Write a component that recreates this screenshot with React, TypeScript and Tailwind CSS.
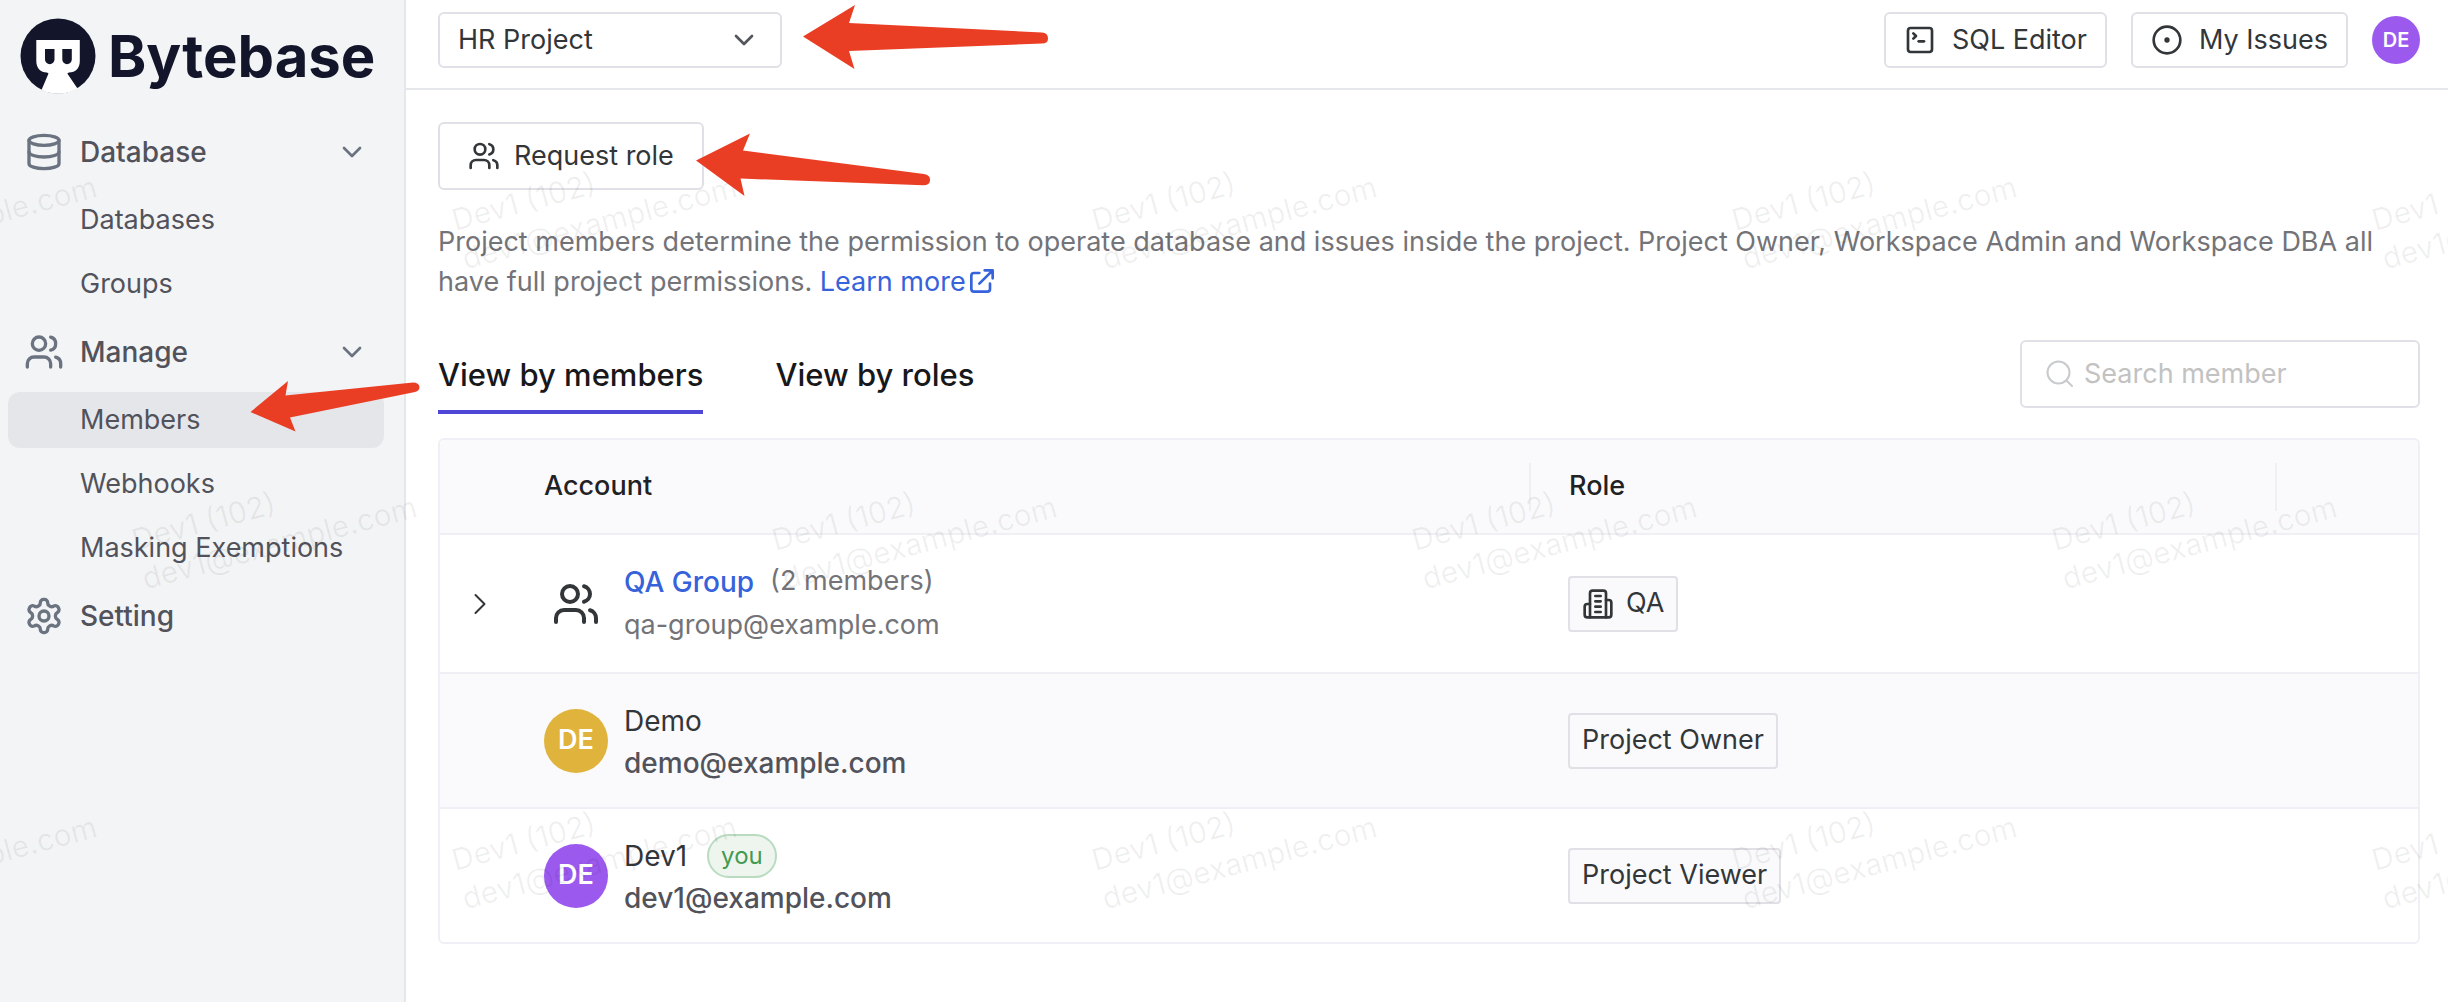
import React from "react";
import { ChevronDown, CircleDot, Database, SquareTerminal, Users } from "lucide-react";

const navItem =
  "flex h-14 items-center rounded-xl pl-18 text-[27px] text-[#52525b]";

function GearIcon() {
  return (
    <svg
      viewBox="0 0 24 24"
      className="size-10 shrink-0 text-[#6b7280]"
      fill="none"
      stroke="currentColor"
      strokeWidth="2"
      strokeLinecap="round"
      strokeLinejoin="round"
      aria-hidden="true"
    >
      <path d="M12.22 2h-.44a2 2 0 0 0-2 2v.18a2 2 0 0 1-1 1.73l-.43.25a2 2 0 0 1-2 0l-.15-.08a2 2 0 0 0-2.73.73l-.22.38a2 2 0 0 0 .73 2.73l.15.1a2 2 0 0 1 1 1.72v.51a2 2 0 0 1-1 1.74l-.15.09a2 2 0 0 0-.73 2.73l.22.38a2 2 0 0 0 2.73.73l.15-.08a2 2 0 0 1 2 0l.43.25a2 2 0 0 1 1 1.73V20a2 2 0 0 0 2 2h.44a2 2 0 0 0 2-2v-.18a2 2 0 0 1 1-1.73l.43-.25a2 2 0 0 1 2 0l.15.08a2 2 0 0 0 2.73-.73l.22-.39a2 2 0 0 0-.73-2.73l-.15-.08a2 2 0 0 1-1-1.74v-.5a2 2 0 0 1 1-1.74l.15-.09a2 2 0 0 0 .73-2.73l-.22-.38a2 2 0 0 0-2.73-.73l-.15.08a2 2 0 0 1-2 0l-.43-.25a2 2 0 0 1-1-1.73V4a2 2 0 0 0-2-2z" />
      <circle cx="12" cy="12" r="3" />
    </svg>
  );
}

function BuildingIcon() {
  return (
    <svg
      viewBox="0 0 24 24"
      className="size-8 shrink-0"
      fill="none"
      stroke="currentColor"
      strokeWidth="2"
      strokeLinecap="round"
      strokeLinejoin="round"
      aria-hidden="true"
    >
      <path d="M6 22V4a2 2 0 0 1 2-2h8a2 2 0 0 1 2 2v18Z" />
      <path d="M6 12H4a2 2 0 0 0-2 2v6a2 2 0 0 0 2 2h2" />
      <path d="M18 9h2a2 2 0 0 1 2 2v9a2 2 0 0 1-2 2h-2" />
      <path d="M10 6h4M10 10h4M10 14h4M10 18h4" />
    </svg>
  );
}

function Logo() {
  return (
    <a href="#home" className="flex h-[76px] items-center gap-3" aria-label="Bytebase">
      <svg viewBox="0 0 76 76" className="size-[76px] shrink-0" aria-hidden="true">
        <circle cx="38" cy="38" r="37.5" fill="#13162a" />
        <path
          fill="#fff"
          d="M16.300 22h43.500V43c0 7-4 11.500-11 11.500l-1.500 1L57.500 70.500a38 38 0 0 1-36 1.500L28.500 55.500l-1.500-1C20.500 54.500 16.300 50 16.300 43z"
        />
        <path
          fill="#13162a"
          d="M25 31h9.500v10.500a4.750 4.750 0 0 1-9.500 0zM42.300 31h9.500v10.500a4.750 4.750 0 0 1-9.500 0z"
        />
      </svg>
      <span className="text-[58px] leading-none font-bold text-[#13162a]">Bytebase</span>
    </a>
  );
}

function GroupHeading({
  icon,
  label,
  expandable = true,
}: {
  icon: React.ReactNode;
  label: string;
  expandable?: boolean;
}) {
  return (
    <button
      type="button"
      className="flex h-14 items-center pr-4 pl-4 text-left text-[28px] font-medium text-[#52525b]"
    >
      {icon}
      <span className="ml-4 flex-1">{label}</span>
      {expandable && <ChevronDown className="size-8 text-[#6b7280]" aria-hidden="true" />}
    </button>
  );
}

function Sidebar() {
  return (
    <aside className="w-[406px] shrink-0 border-r-2 border-[#e5e7eb] bg-[#f3f4f6]">
      <div className="pt-[18px] pl-5">
        <Logo />
      </div>
      <nav className="mt-[30px] flex flex-col gap-3 pr-5 pl-2" aria-label="Project">
        <GroupHeading
          icon={<Database className="size-10 text-[#6b7280]" aria-hidden="true" />}
          label="Database"
        />
        <div className="flex flex-col gap-2">
          <a href="#databases" className={navItem}>Databases</a>
          <a href="#groups" className={navItem}>Groups</a>
        </div>
        <GroupHeading
          icon={<Users className="size-10 text-[#6b7280]" aria-hidden="true" />}
          label="Manage"
        />
        <div className="flex flex-col gap-2">
          <a href="#members" aria-current="page" className={`${navItem} bg-[#e5e6ea]`}>Members</a>
          <a href="#webhooks" className={navItem}>Webhooks</a>
          <a href="#masking" className={navItem}>Masking Exemptions</a>
        </div>
        <GroupHeading icon={<GearIcon />} label="Setting" expandable={false} />
      </nav>
    </aside>
  );
}

function TopBar() {
  const button =
    "flex h-14 items-center gap-4 rounded-md border-2 border-[#e0e0e6] bg-white px-[18px] text-[27px] text-[#333639]";
  return (
    <header className="flex h-[90px] items-start justify-between border-b-2 border-[#e5e7eb] pt-3 pr-7 pl-8">
      <div className="relative w-[344px]">
        <select
          aria-label="Project"
          className="h-14 w-full appearance-none rounded-md border-2 border-[#e0e0e6] bg-white pl-[18px] text-[27px] text-[#333639]"
        >
          <option>HR Project</option>
        </select>
        <ChevronDown
          className="pointer-events-none absolute top-3 right-[22px] size-8 text-[#52555a]"
          aria-hidden="true"
        />
      </div>
      <div className="flex h-14 items-center gap-6">
        <button type="button" className={button}>
          <SquareTerminal className="size-8" aria-hidden="true" />
          SQL Editor
        </button>
        <button type="button" className={button}>
          <CircleDot className="size-8" aria-hidden="true" />
          My Issues
        </button>
        <button
          type="button"
          className="flex size-12 items-center justify-center rounded-full bg-[#9b59ee] text-[20px] font-semibold text-white"
        >
          DE
        </button>
      </div>
    </header>
  );
}

function Badge({ children }: { children: React.ReactNode }) {
  return (
    <span className="inline-flex h-14 items-center gap-3 rounded-sm border-2 border-[#e0e0e6] bg-[#fafafc] px-3 align-middle text-[27px] whitespace-nowrap text-[#333639]">
      {children}
    </span>
  );
}

function Avatar({ color }: { color: string }) {
  return (
    <span
      className={`flex size-16 shrink-0 items-center justify-center rounded-full text-[27px] font-semibold text-white ${color}`}
    >
      DE
    </span>
  );
}

function Account({
  avatar,
  title,
  email,
}: {
  avatar: React.ReactNode;
  title: React.ReactNode;
  email: React.ReactNode;
}) {
  return (
    <div className="flex items-center gap-4">
      {avatar}
      <div>
        <div className="flex h-11 items-center text-[28px]">{title}</div>
        {email}
      </div>
    </div>
  );
}

function MembersTable() {
  const line = "border-b-2 border-[#efeff5]";
  const email = "flex h-10 items-center text-[28px] font-medium text-[#52525b]";
  return (
    <div className="mt-6 overflow-hidden rounded-md border-2 border-[#efeff5]">
      <table className="w-full table-fixed border-separate border-spacing-0 text-left">
        <colgroup>
          <col className="w-20" />
          <col />
          <col className="w-[746px]" />
          <col className="w-[127px]" />
        </colgroup>
        <thead className="bg-[#fafafc] text-[27px] text-[#1f2225]">
          <tr className="h-[95px]">
            <th className={line} aria-label="Expand" />
            <th className={`${line} pr-[14px] pl-6 font-medium`}>
              <div className="flex h-12 items-center border-r-2 border-[#efeff5]">Account</div>
            </th>
            <th className={`${line} pr-[14px] pl-6 font-medium`}>
              <div className="flex h-12 items-center border-r-2 border-[#efeff5]">Role</div>
            </th>
            <th className={line} aria-label="Actions" />
          </tr>
        </thead>
        <tbody>
          <tr className="h-[139px]">
            <td className={line}>
              <button type="button" aria-label="Expand QA Group" className="flex w-full justify-center">
                <svg
                  viewBox="0 0 12 22"
                  className="h-[22px] w-3 text-[#333639]"
                  fill="none"
                  stroke="currentColor"
                  strokeWidth="2"
                  strokeLinecap="round"
                  strokeLinejoin="round"
                  aria-hidden="true"
                >
                  <path d="M1.500 2L10.500 11L1.500 20" />
                </svg>
              </button>
            </td>
            <td className={`${line} pl-6`}>
              <Account
                avatar={
                  <span className="flex size-16 shrink-0 items-center justify-center text-[#333639]">
                    <Users className="size-12" aria-hidden="true" />
                  </span>
                }
                title={
                  <>
                    <a href="#qa-group" className="font-medium text-[#3662db]">QA Group</a>
                    <span className="ml-4 text-[27px] text-[#737378]">(2 members)</span>
                  </>
                }
                email={<div className="flex h-11 items-center text-[27px] text-[#737378]">qa-group@example.com</div>}
              />
            </td>
            <td className={`${line} pl-[23px]`}>
              <Badge>
                <BuildingIcon />
                QA
              </Badge>
            </td>
            <td className={line} />
          </tr>
          <tr className="h-[135px] bg-[#fafafc]">
            <td className={line} />
            <td className={`${line} pl-6`}>
              <Account
                avatar={<Avatar color="bg-[#e0b43c]" />}
                title={<span className="text-[#333639]">Demo</span>}
                email={<div className={email}>demo@example.com</div>}
              />
            </td>
            <td className={`${line} pl-[23px]`}><Badge>Project Owner</Badge></td>
            <td className={line} />
          </tr>
          <tr className="h-[133px]">
            <td />
            <td className="pl-6">
              <Account
                avatar={<Avatar color="bg-[#9b59ee]" />}
                title={
                  <>
                    <span className="text-[#333639]">Dev1</span>
                    <span className="ml-5 flex h-11 items-center rounded-full border-2 border-[#b9dcc0] bg-[#edf5ee] px-3 text-[24px] text-[#449a4e]">
                      you
                    </span>
                  </>
                }
                email={<div className={email}>dev1@example.com</div>}
              />
            </td>
            <td className="pl-[23px]"><Badge>Project Viewer</Badge></td>
            <td />
          </tr>
        </tbody>
      </table>
    </div>
  );
}

function Watermark() {
  const marks: { x: number; y: number }[] = [];
  for (let row = 0; row < 3; row++) {
    for (let col = 0; col < 5; col++) {
      marks.push({ x: -185 + (row % 2) * 320 + col * 640, y: 230 + row * 320 });
    }
  }
  return (
    <div className="pointer-events-none absolute inset-0 overflow-hidden" aria-hidden="true">
      {marks.map(({ x, y }) => (
        <div
          key={`${x}-${y}`}
          className="absolute origin-[0px_30px] -rotate-15 text-[30px] leading-10 whitespace-nowrap text-black/6"
          style={{ left: x, top: y - 30 }}
        >
          Dev1 (102)
          <br />
          dev1@example.com
        </div>
      ))}
    </div>
  );
}

function Arrows() {
  return (
    <svg
      className="pointer-events-none absolute top-0 left-0 h-[450px] w-[1100px]"
      viewBox="0 0 1100 450"
      fill="#ea3e24"
      aria-hidden="true"
    >
      <path d="M803 36.500L855 5L849 23L1042 32.500Q1048 33 1048 38.500Q1048 43.500 1042 43.500L849 51L854.500 69Z" />
      <path d="M696 160.500L750 133.500L743 150.500L924 174Q930.500 175 930 180.500Q929.500 185.500 923 185.300L740.500 178.500L744.500 196Z" />
      <path d="M250.500 412L288 381L285.500 395.500L413 382.500Q419 382.500 419.500 387Q419.500 391 415 392L290 417.500L295.500 431.500Z" />
    </svg>
  );
}

export default function App() {
  return (
    <div className="relative flex min-h-screen bg-white font-[Inter,'Liberation_Sans',sans-serif]">
      <Sidebar />
      <div className="min-w-0 flex-1">
        <TopBar />
        <main className="pt-8 pr-7 pl-8">
          <button
            type="button"
            className="flex h-[68px] items-center gap-[14px] rounded-md border-2 border-[#e0e0e6] px-7 text-[27px] text-[#333639]"
          >
            <Users className="size-8" aria-hidden="true" />
            Request role
          </button>
          <p className="mt-8 text-[27px] leading-10 text-[#737378]">
            Project members determine the permission to operate database and issues inside the project. Project Owner,
            Workspace Admin and Workspace DBA all have full project permissions.{" "}
            <a href="#learn-more" className="whitespace-nowrap text-[#3662db]">
              Learn more
              <svg
                viewBox="0 0 24 24"
                className="inline size-8 align-[-6px]"
                fill="none"
                stroke="currentColor"
                strokeWidth="2"
                strokeLinecap="round"
                strokeLinejoin="round"
                aria-hidden="true"
              >
                <path d="M10 6H6a2 2 0 0 0-2 2v10a2 2 0 0 0 2 2h10a2 2 0 0 0 2-2v-4M14 4h6m0 0v6m0-6L10 14" />
              </svg>
            </a>
          </p>
          <div className="mt-[38px] flex h-[74px] items-start justify-between">
            <div role="tablist" className="flex gap-[72px] text-[31px] font-medium text-[#18181b]">
              <button type="button" role="tab" aria-selected="true" className="h-[74px] border-b-4 border-[#4f46d8]">
                View by members
              </button>
              <button type="button" role="tab" aria-selected="false" className="h-[74px] border-b-4 border-transparent">
                View by roles
              </button>
            </div>
            <label className="flex h-[68px] w-[400px] items-center gap-2 rounded-md border-2 border-[#e0e0e6] px-[22px]">
              <svg
                viewBox="0 0 32 32"
                className="size-8 shrink-0 text-[#c8cacd]"
                fill="none"
                stroke="currentColor"
                strokeWidth="2"
                strokeLinecap="round"
                aria-hidden="true"
              >
                <circle cx="14.500" cy="14.500" r="11" />
                <path d="M22.500 22.500L28 28" />
              </svg>
              <input
                type="text"
                aria-label="Search member"
                placeholder="Search member"
                className="min-w-0 flex-1 text-[27px] outline-none placeholder:text-[#c2c2c2]"
              />
            </label>
          </div>
          <MembersTable />
        </main>
      </div>
      <Watermark />
      <Arrows />
    </div>
  );
}
